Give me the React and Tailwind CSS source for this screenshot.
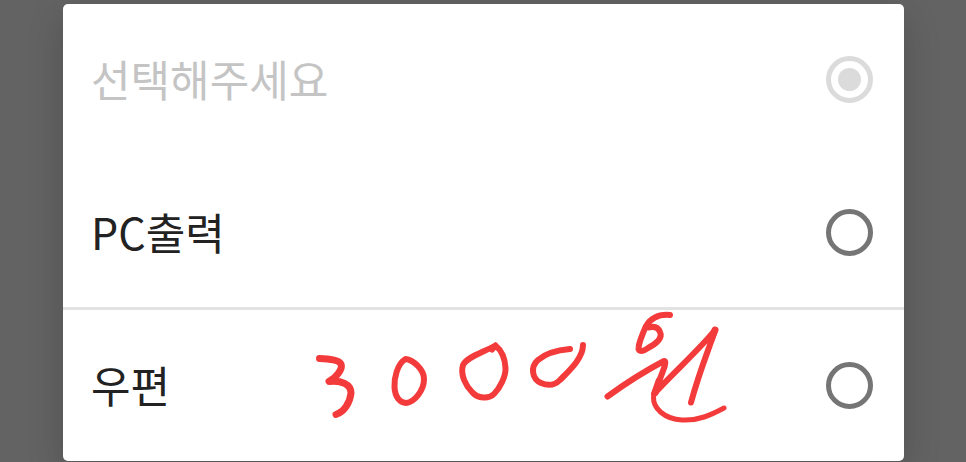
import { useState } from "react";

const options = [
  { value: "", label: "선택해주세요", disabled: true, row: "h-[151px]" },
  {
    value: "pc",
    label: "PC출력",
    row: "h-[152px] border-t-3 border-transparent",
  },
  {
    value: "mail",
    label: "우편",
    row: "h-[154px] border-t-3 border-[#e2e2e2]",
  },
];

function Option({ option, checked, onSelect }) {
  return (
    <label
      className={`flex items-center justify-between pr-[31px] pl-7 ${option.row} ${
        option.disabled ? "text-[#c4c4c4]" : "text-[#222222]"
      }`}
    >
      <span className="pb-1 text-[43px] leading-[64px]">{option.label}</span>
      <input
        type="radio"
        name="delivery"
        value={option.value}
        checked={checked}
        disabled={option.disabled}
        onChange={() => onSelect(option.value)}
        className="grid size-[47px] shrink-0 appearance-none place-items-center rounded-full border-5 border-[#757575] before:size-[23px] before:rounded-full before:bg-transparent checked:before:bg-[#757575] disabled:border-[#dbdbdb] disabled:checked:before:bg-[#dbdbdb]"
      />
    </label>
  );
}

function PriceNote() {
  return (
    <svg
      role="img"
      aria-label="3000원"
      viewBox="300 300 440 140"
      className="pointer-events-none absolute bottom-[21px] left-[237px] h-[140px] w-[440px]"
      fill="none"
      stroke="#f43b3c"
      strokeWidth="6"
      strokeLinecap="round"
      strokeLinejoin="round"
    >
      <g strokeWidth="7">
        <path d="M319.500 358.500C329 359 339 360 341 364C343 369 336 378 329 381.500C341 380 351 384 351 393C350 403 344 412 336 414.500" />
        <path strokeWidth="6" d="M405.500 359C397 364 394 379 394.500 387C395 397 400 403 406 403C415 402 424 390 424 379C424 369 413 360 405.500 359Z" />
        <path strokeWidth="6" d="M495.500 345.500C482 353 467 357 463 365C460 375 466 386 472 392C478 399 489 399 494 394C500 388 506 376 505.500 368C505 358 501 350 495.500 345.500L492 349.500" />
        <path strokeWidth="6" d="M570 349C559 350 546 353 538 360C530 367 532 379 541 383C548 386 555 385 560 380C570 370 583 358 583 345" />
      </g>
      <path d="M670 315C659 314 651 318 646 326C642 335 639 342 638.500 348C638 352 643 352 648 348C656 344 663 338 660 332C658 327 654 326 649 327.500" />
      <path d="M607.500 396.500C626 383 645 371 664 361C668 361 662 373 654 394C672 374 702 347 715 330C710 347 701 366 691 402.500" />
      <path d="M715 330L711 340M655 393L659 381" strokeWidth="7" />
      <path d="M653.500 397C653 408 664 419 682 420C698 421 711 415 724 408" strokeWidth="5" />
    </svg>
  );
}

export default function App() {
  const [selected, setSelected] = useState("");

  return (
    <main className="min-h-screen bg-[#636363] pt-1 pr-[62px] pb-px pl-[63px] font-['Noto_Sans_CJK_KR',sans-serif]">
      <div
        role="dialog"
        aria-label="선택해주세요"
        className="relative rounded-[5px] bg-white shadow-[0_12px_36px_rgba(0,0,0,0.18)]"
      >
        <fieldset>
          {options.map((option) => (
            <Option
              key={option.value}
              option={option}
              checked={selected === option.value}
              onSelect={setSelected}
            />
          ))}
        </fieldset>
        <PriceNote />
      </div>
    </main>
  );
}
